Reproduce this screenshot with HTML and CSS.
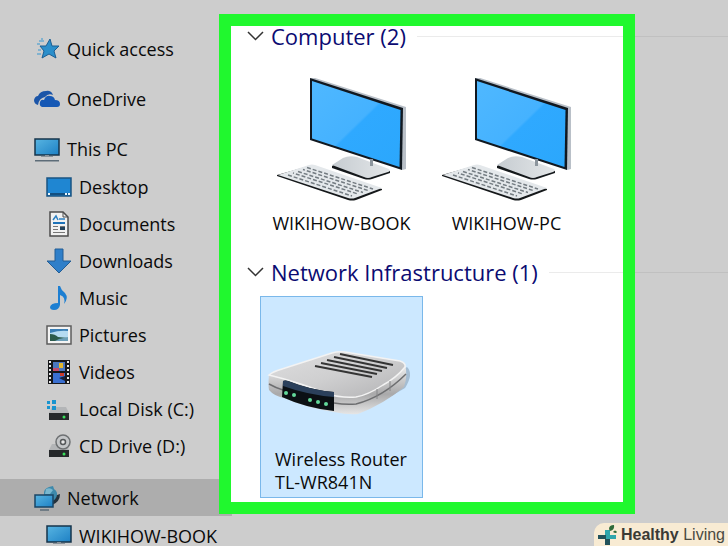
FILE: index.html
```html
<!DOCTYPE html>
<html lang="en">

<head>
    <meta charset="UTF-8">
    <meta name="viewport" content="width=device-width, initial-scale=1.0">
    <title>Network</title>
    <link rel="stylesheet" href="styles.css">
</head>

<body>
    <!--Shared shapes-->
    <svg class="defs" aria-hidden="true">
        <defs>
            <linearGradient id="screenFill" x1="0" y1="0" x2="1" y2="1">
                <stop offset="0" stop-color="#4fb8ff" />
                <stop offset="0.5" stop-color="#45b2ff" />
                <stop offset="0.52" stop-color="#2fa9ff" />
                <stop offset="1" stop-color="#2ba7fc" />
            </linearGradient>
            <linearGradient id="smallFill" x1="0" y1="0" x2="1" y2="1">
                <stop offset="0" stop-color="#58b5e2" />
                <stop offset="1" stop-color="#1d80c4" />
            </linearGradient>
            <linearGradient id="baseFill" x1="0" y1="0" x2="1" y2="0">
                <stop offset="0" stop-color="#c6ccd1" />
                <stop offset="1" stop-color="#e3e6e8" />
            </linearGradient>
            <linearGradient id="routerTop" x1="0" y1="0" x2="1" y2="1">
                <stop offset="0" stop-color="#dededf" />
                <stop offset="0.5" stop-color="#cfcfd0" />
                <stop offset="1" stop-color="#b2b2b4" />
            </linearGradient>
            <linearGradient id="routerSide" x1="0" y1="0" x2="0" y2="1">
                <stop offset="0" stop-color="#f2f2f2" />
                <stop offset="0.6" stop-color="#a9a9aa" />
                <stop offset="1" stop-color="#e6e6e6" />
            </linearGradient>
            <symbol id="computer" viewBox="0 0 130 124">
                <path d="M33 0 L35 -1 L129 29 L129 91 L125 92 Z" fill="#b9c0c8" />
                <path d="M33 0 L126 30 L125 92 L33 62 Z" fill="#111820" />
                <path d="M35 3 L123.500 32 L122.500 89 L35 60.500 Z" fill="url(#screenFill)" />
                <path d="M55 88 L67 81 L113 93 L113 95 L95 101 Q91 102 87 101 L55 90 Z" fill="#14181b" />
                <path d="M55 87 L66 80 Q72 77 80 79 L112 91 Q114 93 111 94 L95 99 Q91 101 87 99 Z" fill="url(#baseFill)" />
                <path d="M93 81 h3 v7 h-3 Z" fill="#8c959d" />
                <path d="M0 97 L32 88 L105 111 L105 112 L79 122 Q75 123 71 122 L0 98 Z" fill="#15181a" />
                <path d="M1 97 L32 87 Q35 86 38 87 L105 110 L78 120 Q75 121 71 120 Z" fill="#e4e8eb" />
                <g stroke="#747c82" stroke-width="1.500" stroke-dasharray="4 2">
                    <path d="M30 89.500 L96 111" />
                    <path d="M26 91.500 L91 112.500" stroke-dashoffset="2" />
                    <path d="M21 93.500 L86 114.500" />
                    <path d="M16 95 L81 116" stroke-dashoffset="3" />
                    <path d="M11 97 L75 118" />
                </g>
            </symbol>
            <symbol id="monitor" viewBox="0 0 26 26">
                <path d="M1 3 h24 v16 H1 Z" fill="url(#smallFill)" stroke="#16344b" stroke-width="1.500" />
                <path d="M11 19 h4 v1 h4 v1 H7 v-1 h4 Z" fill="#8a9299" />
                <path d="M1 24 h24 v1.500 H1 Z" fill="#5d6c78" />
            </symbol>
            <symbol id="drive" viewBox="0 0 26 26">
                <path d="M6 11 H20 L23 17 H3 Z" fill="#b3b5b7" />
                <path d="M3 17 h20 v7 H3 Z" fill="#25282a" />
                <circle cx="18" cy="21" r="1.500" fill="#38e05a" />
            </symbol>
        </defs>
    </svg>

    <div class="explorer">
        <!--Navigation-->
        <nav class="sidebar">
            <ul class="tree">
                <li>
                    <a class="row" href="#">
                        <svg class="icon" viewBox="0 0 26 26">
                            <path d="M16 3 L18 10 L25 10 L20 15 L22 22 L15 18 L8 22 L10 15 L6 10 L12 10 Z" fill="#2b8fcb" stroke="#1b5e93" />
                            <path d="M5 5 h5 M3 8 h3 M4 14 h3 M3 18 h4 M7 3 h2" stroke="#68a9d0" stroke-width="1.500" />
                        </svg>
                        <span>Quick access</span>
                    </a>
                </li>
                <li>
                    <a class="row" href="#">
                        <svg class="icon" viewBox="0 0 26 26">
                            <path d="M4 19 Q0 18 0 14 Q1 10 4 10 Q6 5 12 5 Q17 4 19 9 Q14 7 11 11 Q5 12 4 19 Z" fill="#1b55a8" />
                            <path d="M8 21 Q5 20 6 16 Q7 13 10 14 Q12 9 16 10 Q20 10 21 14 Q26 14 26 18 Q26 21 23 21 Z" fill="#1558b5" />
                        </svg>
                        <span>OneDrive</span>
                    </a>
                </li>
                <li>
                    <a class="row" href="#">
                        <svg class="icon"><use href="#monitor" /></svg>
                        <span>This PC</span>
                    </a>
                    <ul class="branch">
                        <li>
                            <a class="row" href="#">
                                <svg class="icon" viewBox="0 0 26 26">
                                    <path d="M1 4 h24 v18 H1 Z" fill="#1f86d2" stroke="#1a5483" stroke-width="1.500" />
                                    <path d="M2 20 h22" stroke="#134f80" stroke-width="2" />
                                    <path d="M2 20 h2 M19 20 h2 M22 20 h2" stroke="#e8f4fc" stroke-width="2" />
                                </svg>
                                <span>Desktop</span>
                            </a>
                        </li>
                        <li>
                            <a class="row" href="#">
                                <svg class="icon" viewBox="0 0 26 26">
                                    <path d="M4 1 H17 L22 6 V25 H4 Z" fill="#f1f1f1" stroke="#4c4c4c" stroke-width="1.500" />
                                    <path d="M17 1 V6 H22" fill="none" stroke="#4c4c4c" />
                                    <path d="M7 9 l3 -4 l2 4 M13 8 h6" fill="none" stroke="#2b7fc1" stroke-width="1.500" />
                                    <path d="M7 12 h12" stroke="#1d72b8" stroke-width="2" />
                                    <path d="M7 15.500 h5 M7 18.500 h5 M7 21.500 h12 M14 15.500 h5" stroke="#777" />
                                    <path d="M14 16 h5 v3 h-5 Z" fill="#23425c" />
                                </svg>
                                <span>Documents</span>
                            </a>
                        </li>
                        <li>
                            <a class="row" href="#">
                                <svg class="icon" viewBox="0 0 26 26">
                                    <path d="M9 1 H17 V13 H25 L13 25 L1 13 H9 Z" fill="#2f7fc9" stroke="#235d94" />
                                </svg>
                                <span>Downloads</span>
                            </a>
                        </li>
                        <li>
                            <a class="row" href="#">
                                <svg class="icon" viewBox="0 0 26 26">
                                    <path d="M12 1 H14 Q15 5 19 8 Q23 13 18 19 Q20 12 14 10 V20 Q13 25 8 25 Q4 25 4 22 Q5 18 12 18 Z" fill="#1d7fd2" />
                                </svg>
                                <span>Music</span>
                            </a>
                        </li>
                        <li>
                            <a class="row" href="#">
                                <svg class="icon" viewBox="0 0 26 26">
                                    <path d="M1 4 h24 v18 H1 Z" fill="#f4f4f4" stroke="#5c5c5c" stroke-width="1.500" />
                                    <path d="M4 7 h18 v12 H4 Z" fill="#b5dbf2" />
                                    <path d="M4 7 h18 v2 Q14 8 4 11 Z" fill="#397eb5" />
                                    <path d="M4 12 Q9 12 12 15 L22 16 V19 H4 Z" fill="#2c5b4c" />
                                    <path d="M13 17 L22 15 V19 H9 Z" fill="#6c9fb8" />
                                </svg>
                                <span>Pictures</span>
                            </a>
                        </li>
                        <li>
                            <a class="row" href="#">
                                <svg class="icon" viewBox="0 0 26 26">
                                    <path d="M2 1 h22 v24 H2 Z" fill="#17181b" />
                                    <path d="M4 2 V24 M22 2 V24" stroke="#e9e9e9" stroke-width="2" stroke-dasharray="2 2" />
                                    <path d="M7 3 h12 v9 H7 Z" fill="#4b77bf" />
                                    <path d="M7 14 h12 v10 H7 Z" fill="#3a6fd0" />
                                    <path d="M13 4 h4 v5 h-4 Z" fill="#e3b72e" />
                                    <path d="M7 9 h6 v3 H7 Z" fill="#c24a6b" />
                                    <path d="M14 14 h4 v3 h-4 Z" fill="#cb3b2b" />
                                    <path d="M13 19 l6 -2 v5 Z" fill="#17213c" />
                                </svg>
                                <span>Videos</span>
                            </a>
                        </li>
                        <li>
                            <a class="row" href="#">
                                <svg class="icon" viewBox="0 0 26 26">
                                    <use href="#drive" />
                                    <path d="M1 5 h3 v3 H1 Z M6 4 h4 v4 H6 Z M1 10 h3 v3 H1 Z M6 10 h4 v4 H6 Z" fill="#1994cf" />
                                </svg>
                                <span>Local Disk (C:)</span>
                            </a>
                        </li>
                        <li>
                            <a class="row" href="#">
                                <svg class="icon" viewBox="0 0 26 26">
                                    <use href="#drive" />
                                    <circle cx="17" cy="9" r="7" fill="#c4c6c8" stroke="#6e7173" stroke-width="1.500" />
                                    <circle cx="17" cy="9" r="2.500" fill="#e8e8e8" stroke="#55585a" stroke-width="1.500" />
                                </svg>
                                <span>CD Drive (D:)</span>
                            </a>
                        </li>
                    </ul>
                </li>
                <li>
                    <a class="row current" href="#">
                        <svg class="icon" viewBox="0 0 26 26">
                            <path d="M10 10 Q9 4 15 2 L19 1 L20 4 Q25 7 22 14 L19 17 Z" fill="#3d89ab" />
                            <path d="M12 4 Q16 2 19 5 L16 9 L11 9 Z" fill="#79b7cf" />
                            <path d="M26 9 Q26 17 18 20 L18 16 Q22 15 23 10 Z" fill="#26323c" />
                            <path d="M1 10 h18 v12 H1 Z" fill="url(#smallFill)" stroke="#1a4566" stroke-width="1.500" />
                            <path d="M6 25 h9" stroke="#5d6c78" stroke-width="1.500" />
                        </svg>
                        <span>Network</span>
                    </a>
                    <ul class="branch">
                        <li>
                            <a class="row" href="#">
                                <svg class="icon"><use href="#monitor" /></svg>
                                <span>WIKIHOW-BOOK</span>
                            </a>
                        </li>
                    </ul>
                </li>
            </ul>
        </nav>

        <!--Devices-->
        <main class="frame">
            <section class="group">
                <h2 class="group-title">
                    <svg class="chevron" viewBox="0 0 17 10"><path d="M1 1 L8.500 8.500 L16 1" /></svg>
                    <span>Computer (2)</span>
                </h2>
                <div class="tiles">
                    <div class="tile">
                        <svg class="device"><use href="#computer" /></svg>
                        <span class="tile-name">WIKIHOW-BOOK</span>
                    </div>
                    <div class="tile">
                        <svg class="device"><use href="#computer" /></svg>
                        <span class="tile-name">WIKIHOW-PC</span>
                    </div>
                </div>
            </section>
            <section class="group">
                <h2 class="group-title">
                    <svg class="chevron" viewBox="0 0 17 10"><path d="M1 1 L8.500 8.500 L16 1" /></svg>
                    <span>Network Infrastructure (1)</span>
                </h2>
                <div class="tiles">
                    <div class="tile selected">
                        <svg class="device router" viewBox="0 0 148 124">
                            <path d="M120 84 L137 74 Q146 60 139 53 L128 60 Z" fill="#a4bdd3" />
                            <path d="M1 61 Q0 70 1 76 Q6 82 16 84 Q40 94 66 98 Q80 101 90 100 Q116 90 136 73 Q140 62 137 50 L88 82 Z" fill="url(#routerSide)" />
                            <path d="M1 61 Q4 58 14 55 L64 39 Q70 37 77 38 L132 47 Q138 49 137 53 Q128 64 115 71 Q100 81 88 83 Q72 84 60 80 Q30 68 1 61 Z" fill="url(#routerTop)" stroke="#f3f3f3" stroke-width="1.500" />
                            <path d="M1 70 Q8 74 15 76 M66 89 Q78 91 88 90 Q115 83 138 60" fill="none" stroke="#6d6e70" stroke-width="1.500" />
                            <path d="M109 75 v10 M122 67 v10" stroke="#858688" />
                            <path d="M15 67 Q17 66 20 67 Q42 76 66 78 L66 97 Q38 94 14 83 Z" fill="#0b1014" />
                            <path d="M15 67 Q17 66 20 67 Q42 76 66 78 L66 83 Q40 81 15 72 Z" fill="#2b405b" />
                            <g stroke="#343434" stroke-width="2">
                                <path d="M72 40 L125 51" />
                                <path d="M66 43 L119 54" />
                                <path d="M59 46 L114 57" />
                                <path d="M53 49 L109 60" />
                                <path d="M47 52 L104 63" />
                            </g>
                            <g fill="#62d99a">
                                <circle cx="18" cy="79" r="2" />
                                <circle cx="26" cy="81" r="2" />
                                <circle cx="42" cy="86" r="2" />
                                <circle cx="50" cy="88" r="2" />
                                <circle cx="58" cy="90" r="2" />
                            </g>
                        </svg>
                        <span class="tile-name">Wireless Router<br>TL-WR841N</span>
                    </div>
                </div>
            </section>
        </main>

        <div class="outside">
            <div class="outside-rule"></div>
            <div class="outside-rule"></div>
        </div>
    </div>

    <!--Brand badge-->
    <div class="badge">
        <svg class="badge-icon" viewBox="0 0 22 22">
            <path d="M8 6 h5 v5 h6 v4 h-6 v6 H8 Z" fill="#2fa5ac" />
            <path d="M1 11 h8 v4 H1 Z M8 15 h5 v6 H8 Z" fill="#22525b" />
            <path d="M12 5 Q12 1 17 1 Q18 6 13 7 Z M16 8 Q18 5 20 8 Q19 10 16 8 Z" fill="#2f6b3a" />
        </svg>
        <span><b>Healthy</b> Living</span>
    </div>
</body>

</html>
```
FILE: styles.css
```css
body {
    margin: 0;
    height: 100vh;
    overflow: hidden;
    background-color: #cdcdcd;
    color: #0a0a0a;
    font-family: "Open Sans", "Noto Sans", sans-serif;
    font-size: 18px;
}

.defs {
    position: absolute;
    width: 0;
    height: 0;
}

.explorer {
    display: flex;
    align-items: flex-start;
}

/* left tree */
.sidebar {
    flex: none;
    width: 232px;
    padding-top: 30px;
}

.tree,
.branch {
    margin: 0;
    padding: 0;
    list-style: none;
}

.tree {
    display: flex;
    flex-direction: column;
    gap: 13px;
}

.branch {
    padding: 1px 0 2px;
}

.row {
    display: flex;
    align-items: center;
    gap: 7px;
    height: 37px;
    padding-left: 34px;
    color: inherit;
    text-decoration: none;
    white-space: nowrap;
}

.branch .row {
    padding-left: 46px;
}

.row.current {
    background-color: #adadad;
}

.icon {
    flex: none;
    width: 26px;
    height: 26px;
}

/* highlighted area, overlaps the edge of the tree */
.frame {
    flex: 1;
    min-width: 0;
    margin: 14px 0 0 -13px;
    padding-bottom: 4px;
    border: 12px solid #20f82e;
    background-color: white;
    z-index: 1;
}

.group-title {
    display: flex;
    align-items: center;
    gap: 7px;
    margin: 0;
    padding-left: 16px;
    color: #0b0b72;
    font-size: 22px;
    font-weight: normal;
    line-height: 20px;
    white-space: nowrap;
}

.group-title::after {
    content: "";
    flex: 1;
    height: 1px;
    margin-left: 4px;
    background-color: #ebebeb;
}

.chevron {
    flex: none;
    width: 17px;
    height: 10px;
    fill: none;
    stroke: #333;
    stroke-width: 1.5;
}

.tiles {
    display: flex;
    gap: 2px;
    padding: 14px 0 0 29px;
}

.tile {
    display: flex;
    flex-direction: column;
    align-items: center;
    gap: 10px;
    box-sizing: border-box;
    width: 163px;
    min-height: 202px;
    padding-top: 17px;
    border: 1px solid transparent;
    line-height: 23px;
}

.tile.selected {
    border-color: #7ab8ea;
    background-color: #cce8ff;
}

.device {
    width: 130px;
    height: 124px;
    overflow: visible;
}

.device.router {
    width: 148px;
}

.tile.selected .tile-name {
    align-self: flex-start;
    padding-left: 14px;
}

.outside {
    flex: none;
    width: 93px;
    padding-top: 36px;
}

.outside-rule {
    height: 1px;
    margin-bottom: 235px;
    background-color: #c0c0c0;
}

.badge {
    position: absolute;
    right: 0;
    bottom: 0;
    z-index: 2;
    display: flex;
    align-items: center;
    gap: 2px;
    height: 23px;
    padding: 0 3px;
    border-top-left-radius: 10px;
    background-color: #f8ebd3;
    color: #4a4a42;
    font-family: "Liberation Sans", sans-serif;
    font-size: 16px;
    white-space: nowrap;
}

.badge b {
    color: #3a3a35;
}

.badge-icon {
    width: 22px;
    height: 22px;
}
```
